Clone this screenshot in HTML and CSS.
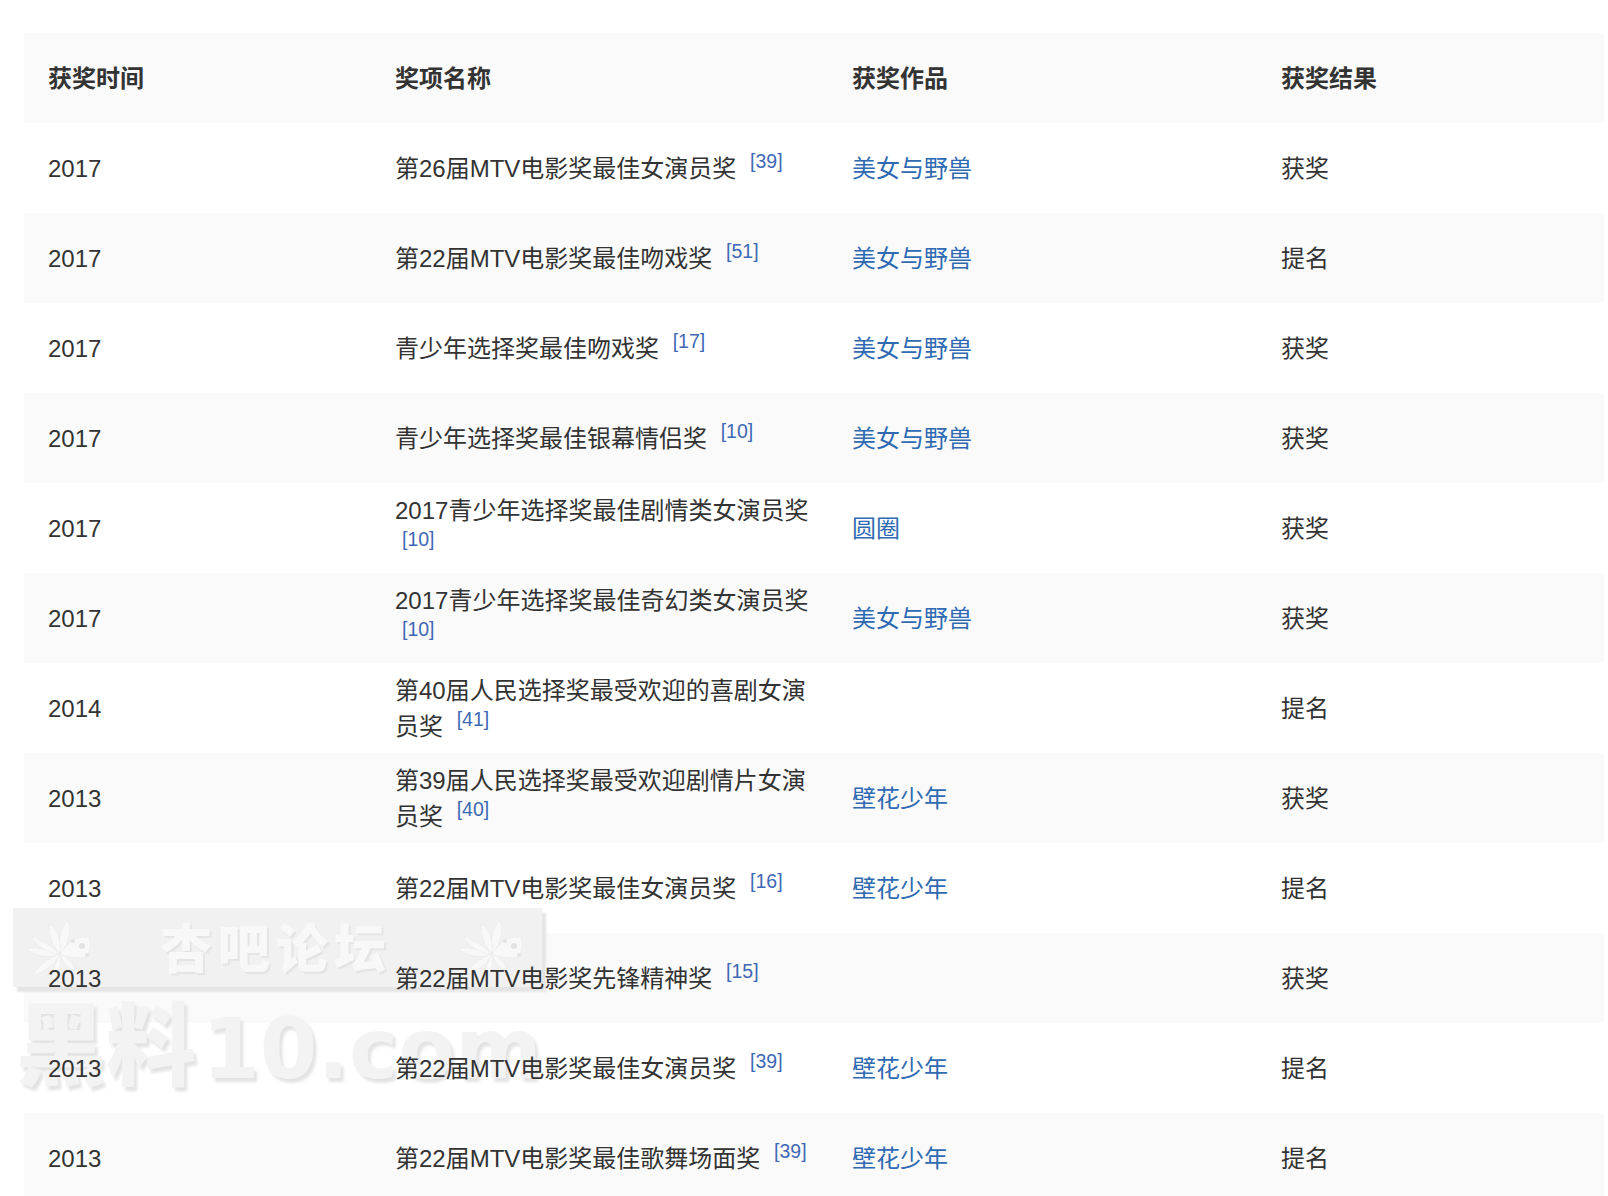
FILE: index.html
```html
<!DOCTYPE html>
<html lang="zh-CN">
<head>
<meta charset="utf-8">
<title>获奖记录</title>
<link rel="stylesheet" href="styles.css">
</head>
<body>
<main class="page">
  <table class="awards">
    <colgroup><col class="c1"><col class="c2"><col class="c3"><col class="c4"></colgroup>
    <thead>
      <tr><th>获奖时间</th><th>奖项名称</th><th>获奖作品</th><th>获奖结果</th></tr>
    </thead>
    <tbody>
      <tr><td>2017</td><td>第26届MTV电影奖最佳女演员奖 <sup>[39]</sup></td><td><a href="#">美女与野兽</a></td><td>获奖</td></tr>
      <tr><td>2017</td><td>第22届MTV电影奖最佳吻戏奖 <sup>[51]</sup></td><td><a href="#">美女与野兽</a></td><td>提名</td></tr>
      <tr><td>2017</td><td>青少年选择奖最佳吻戏奖 <sup>[17]</sup></td><td><a href="#">美女与野兽</a></td><td>获奖</td></tr>
      <tr><td>2017</td><td>青少年选择奖最佳银幕情侣奖 <sup>[10]</sup></td><td><a href="#">美女与野兽</a></td><td>获奖</td></tr>
      <tr><td>2017</td><td>2017青少年选择奖最佳剧情类女演员奖 <sup>[10]</sup></td><td><a href="#">圆圈</a></td><td>获奖</td></tr>
      <tr><td>2017</td><td>2017青少年选择奖最佳奇幻类女演员奖 <sup>[10]</sup></td><td><a href="#">美女与野兽</a></td><td>获奖</td></tr>
      <tr><td>2014</td><td>第40届人民选择奖最受欢迎的喜剧女演员奖 <sup>[41]</sup></td><td></td><td>提名</td></tr>
      <tr><td>2013</td><td>第39届人民选择奖最受欢迎剧情片女演员奖 <sup>[40]</sup></td><td><a href="#">壁花少年</a></td><td>获奖</td></tr>
      <tr><td>2013</td><td>第22届MTV电影奖最佳女演员奖 <sup>[16]</sup></td><td><a href="#">壁花少年</a></td><td>提名</td></tr>
      <tr><td>2013</td><td>第22届MTV电影奖先锋精神奖 <sup>[15]</sup></td><td></td><td>获奖</td></tr>
      <tr><td>2013</td><td>第22届MTV电影奖最佳女演员奖 <sup>[39]</sup></td><td><a href="#">壁花少年</a></td><td>提名</td></tr>
      <tr><td>2013</td><td>第22届MTV电影奖最佳歌舞场面奖 <sup>[39]</sup></td><td><a href="#">壁花少年</a></td><td>提名</td></tr>
    </tbody>
  </table>

  <div class="watermark">
    <div class="wm-band">
      <svg class="wm-flower" viewBox="0 0 70 62" aria-hidden="true">
        <defs>
          <g id="flower">
            <path d="M35 35C33 24 34 10 43 1C47 9 44 25 35 35Z"/>
            <path d="M35 35C28 27 22 15 25 5C32 10 37 23 35 35Z"/>
            <path d="M35 35C25 31 12 27 2 30C9 37 25 40 35 35Z"/>
            <path d="M35 35C27 27 15 21 7 17C10 27 24 35 35 35Z"/>
            <path d="M35 35C25 38 12 47 8 56C18 54 31 45 35 35Z"/>
            <path d="M35 35C31 42 27 52 28 60C35 55 37 45 35 35Z"/>
            <path d="M35 35C37 43 44 50 50 52C49 45 43 38 35 35Z"/>
            <path d="M35 35C42 24 54 16 64 18C66 24 66 34 60 38C52 40 42 38 35 35Z"/>
            <circle class="wm-spot" cx="57" cy="27" r="3"/>
            <circle class="wm-spot" cx="62" cy="36" r="2"/>
            <circle class="wm-spot" cx="48" cy="22" r="2"/>
          </g>
        </defs>
        <use href="#flower"/>
      </svg>
      <span class="wm-title">杏吧论坛</span>
      <svg class="wm-flower" viewBox="0 0 70 62" aria-hidden="true">
        <use href="#flower"/>
      </svg>
    </div>
    <div class="wm-site"><span class="wm-cjk">黑料</span><span class="wm-latin">10.com</span></div>
  </div>
</main>
</body>
</html>
```
FILE: styles.css
```css
* { box-sizing: border-box; }
html, body { margin: 0; padding: 0; background: #fff; }
body { height: 1196px; overflow: hidden; }

.page {
  position: relative;
  padding: 33px 4px 0 24px;
  font-family: "Liberation Sans", "Noto Sans CJK SC", sans-serif;
  font-size: 24px;
  line-height: 36px;
  color: #333;
}

.awards {
  width: 1580px;
  table-layout: fixed;
  border-collapse: collapse;
}
.c1 { width: 347px; }
.c2 { width: 457px; }
.c3 { width: 429px; }
.c4 { width: 347px; }

.awards tr { height: 90px; }
.awards thead tr,
.awards tbody tr:nth-child(even) { background: #fafafa; }

.awards th,
.awards td {
  position: relative;
  z-index: 1;
  padding: 2px 12px 0 24px;
  text-align: left;
  vertical-align: middle;
}
.awards th { font-weight: 700; }
.awards a { color: #2f6ab2; text-decoration: none; }
.awards sup {
  margin-left: 7px;
  font-size: 19.5px;
  line-height: 0;
  vertical-align: 9px;
  color: #3f68b5;
  white-space: nowrap;
}

.watermark {
  position: absolute;
  left: 13px;
  top: 908px;
  width: 534px;
  z-index: 0;
  pointer-events: none;
}
.wm-band {
  display: flex;
  align-items: center;
  justify-content: space-between;
  width: 529px;
  height: 79px;
  padding: 0 15px 0 12px;
  background: #f1f1f1;
  box-shadow: 4px 5px 2px #e5e5e5;
}
.wm-flower { width: 70px; height: 62px; margin-top: 4px; fill: #f8f8f8; stroke: #e6e6e6; stroke-width: .5; }
.wm-spot { fill: #e2e2e2; stroke: none; }
.wm-title {
  margin-top: -4px;
  font-family: "Noto Sans CJK SC", sans-serif;
  font-size: 52px;
  font-weight: 900;
  line-height: 62px;
  letter-spacing: 6px;
  color: #f8f8f8;
  text-shadow: 2px 2px 1px #e4e4e4;
}
.wm-site {
  display: flex;
  align-items: baseline;
  margin-top: 4px;
  padding-left: 3px;
  color: #f3f3f3;
  line-height: 96px;
  white-space: nowrap;
  text-shadow: 3px 4px 3px #e3e3e3;
}
.wm-cjk { font-family: "Noto Sans CJK SC", sans-serif; font-size: 90px; font-weight: 900; }
.wm-latin { margin-left: 6px; font-family: "DejaVu Sans", sans-serif; font-size: 83px; font-weight: 700; }
```
